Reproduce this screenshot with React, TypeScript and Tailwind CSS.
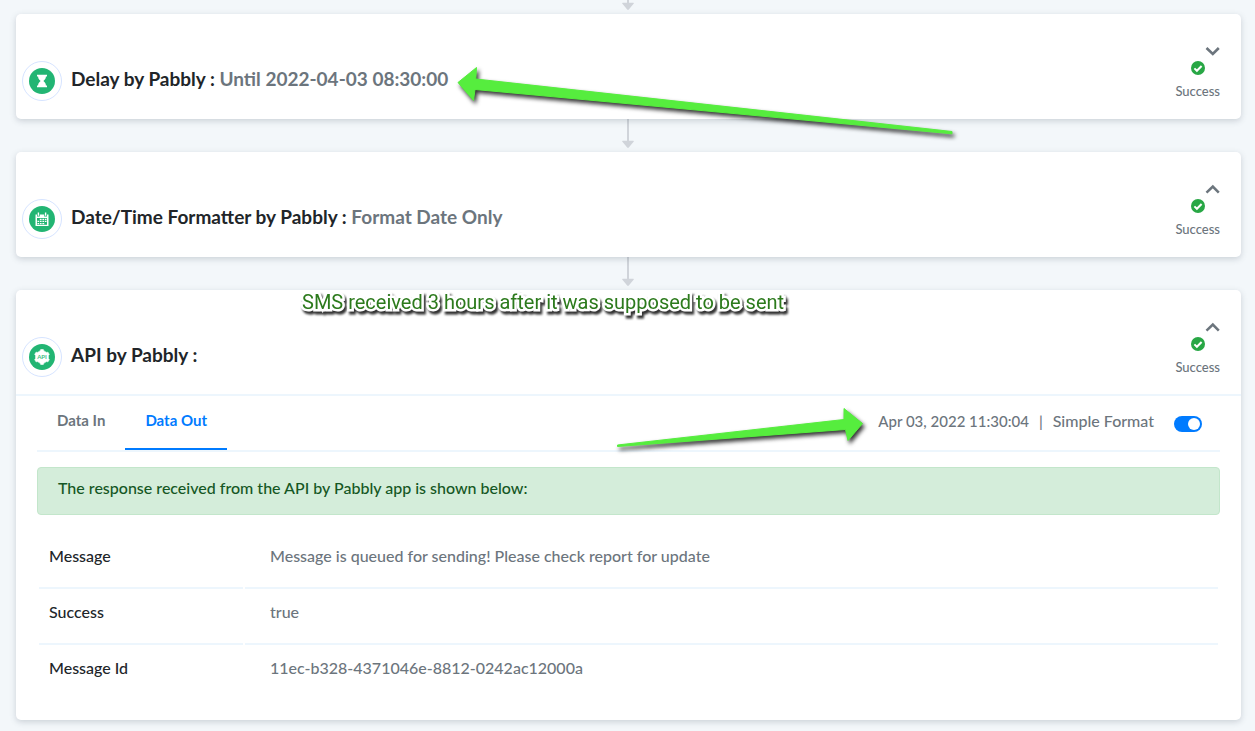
import React, { useState } from 'react';

interface StepHeaderProps {
  title: string;
  detail?: string;
  icon: React.ReactNode;
  open: boolean;
}

interface ResponseRow {
  label: string;
  value: string;
}

const rows: ResponseRow[] = [
  { label: 'Message', value: 'Message is queued for sending! Please check report for update' },
  { label: 'Success', value: 'true' },
  { label: 'Message Id', value: '11ec-b328-4371046e-8812-0242ac12000a' }
];

const HourglassIcon = () => (
  <svg className="w-[26px] h-[26px]" viewBox="0 0 26 26">
    <circle cx="13" cy="13" r="13" fill="#22b573" />
    <path
      d="M8 6.800h10v1.700h-1.100c0 2-1 3.400-2.500 4.500 1.500 1.100 2.500 2.500 2.500 4.500H18v1.700H8v-1.700h1.100c0-2 1-3.400 2.500-4.500-1.500-1.100-2.500-2.500-2.500-4.500H8z"
      fill="white"
    />
  </svg>
);

const CalendarIcon = () => (
  <svg className="w-[26px] h-[26px]" viewBox="0 0 26 26">
    <circle cx="13" cy="13" r="13" fill="#22b573" />
    <path d="M6.500 8.500h13v11.500h-13z" fill="white" />
    <path d="M8 7h2.800v3.400H8zM15.200 7H18v3.400h-2.800z" fill="#22b573" />
    <path d="M8.700 6.500h1.400v3.200H8.700zM15.900 6.500h1.400v3.200h-1.400z" fill="white" />
    <path d="M8 12h10v6.800H8z" fill="#22b573" />
    <path
      d="M10.800 12.700h1.800v1.300h-1.800zM13.400 12.700h1.800v1.300h-1.800zM16 12.700h1.500v1.300H16zM8.500 14.800h1.500v1.300H8.500zM10.800 14.800h1.800v1.300h-1.800zM13.400 14.800h1.800v1.300h-1.800zM16 14.800h1.500v1.300H16zM8.500 16.900h1.500v1.300H8.500zM10.800 16.900h1.800v1.300h-1.800zM13.400 16.900h1.800v1.300h-1.800z"
      fill="white"
    />
  </svg>
);

const ApiIcon = () => (
  <svg className="w-[26px] h-[26px]" viewBox="0 0 26 26">
    <circle cx="13" cy="13" r="13" fill="#22b573" />
    <path
      d="M11.700 5.500h2.600l.6 1.400 2.600 1.500 1.500-.200 1.300 2.200-.9 1.200v2.800l.9 1.200-1.300 2.200-1.500-.200-2.600 1.500-.6 1.400h-2.600l-.6-1.400-2.600-1.500-1.500.2-1.300-2.200.9-1.200v-2.800l-.9-1.200L7 8.200l1.500.2 2.600-1.500z"
      fill="white"
      stroke="white"
      strokeWidth=".6"
      strokeLinejoin="round"
    />
    <text x="13" y="15.200" textAnchor="middle" fontSize="6" fontWeight="700" fill="#3dbd83" fontFamily="Lato, sans-serif">
      API
    </text>
  </svg>
);

const Connector = () => (
  <div className="flex justify-center">
    <svg className="w-[13px] h-[33px]" viewBox="0 0 13 33">
      <path d="M5 0h2v22H5z" fill="#d0d4da" />
      <path d="M.700 21.800h10.600q1 .2.300 1L6.800 28.600q-.800.700-1.600 0L.400 22.800q-.700-.8.300-1z" fill="#d0d4da" />
    </svg>
  </div>
);

const StepHeader: React.FC<StepHeaderProps> = ({ title, detail, icon, open }) => (
  <div className="flex items-start justify-between pl-1.5 pr-[21px] pt-8 pb-[17px]">
    <div className="flex items-center gap-[9px] pt-[15px]">
      <div className="flex w-10 h-10 shrink-0 items-center justify-center rounded-full border border-[#d6e4ff]">
        {icon}
      </div>
      <h2 className="pb-1 font-[Lato,sans-serif] text-[19px] leading-6 font-bold text-[#212529]">
        {title} : {detail && <span className="text-[#6c757d]">{detail}</span>}
      </h2>
    </div>
    <div className="flex flex-col items-center">
      <button type="button" aria-label={open ? 'Collapse step' : 'Expand step'} className="self-end">
        <svg className="w-4 h-[14px]" viewBox="0 0 16 14" fill="none" stroke="#6c757d" strokeWidth="2.600">
          {open ? <path d="M2.500 8.600L8.800 2.600l6 6" /> : <path d="M2.500 2l6.300 6 6-6" />}
        </svg>
      </button>
      <svg className="w-[14px] h-[14px] mt-px" viewBox="0 0 14 14">
        <circle cx="7" cy="7" r="7" fill="#28a745" />
        <path d="M3.400 7.400l2.500 2.400 4.700-4.800" fill="none" stroke="white" strokeWidth="2" />
      </svg>
      <span className="mt-1.5 text-[13px] leading-5 text-[#6c757d]">Success</span>
    </div>
  </div>
);

const ResponseTable = () => (
  <table className="mt-[18px] w-full border-separate border-spacing-[2px] text-left text-[16px] leading-6">
    <tbody>
      {rows.map((row, index) => {
        const line = index < rows.length - 1 ? 'border-[#edf6fd]' : 'border-transparent';
        return (
          <tr key={row.label}>
            <th scope="row" className={`w-[204px] border-b-2 pt-[9px] pb-[19px] pl-2.5 font-medium text-[#212529] ${line}`}>
              {row.label}
            </th>
            <td className={`border-b-2 pt-[9px] pb-[19px] pl-[25px] text-[#6c757d] ${line}`}>{row.value}</td>
          </tr>
        );
      })}
    </tbody>
  </table>
);

export default function App() {
  const [simple, setSimple] = useState(true);
  const card = 'relative rounded-[5px] bg-white shadow-[0_2px_6px_rgba(60,75,90,0.22)]';

  return (
    <main className="min-h-screen overflow-hidden bg-[#f3f7fa] pl-4 pr-3.5 pb-[11px] font-['Lato_Medium',Lato,sans-serif]">
      <div className="flex h-3.5 items-end justify-center overflow-hidden">
        <Connector />
      </div>

      <section className={`${card} z-10 pb-px`}>
        <StepHeader title="Delay by Pabbly" detail="Until 2022-04-03 08:30:00" icon={<HourglassIcon />} open={false} />
        <svg
          className="pointer-events-none absolute left-[434px] top-[46px] h-[84px] w-[516px] drop-shadow-[2px_3px_2px_rgba(0,0,0,0.8)]"
          viewBox="450 60 516 84"
        >
          <path
            d="M458 82.500L476.500 67.500 475.800 79 952 131.500V133.800L475 89.500 473.500 100.500z"
            fill="#56ed3e"
            stroke="#56ed3e"
            strokeLinejoin="round"
          />
        </svg>
      </section>
      <Connector />

      <section className={`${card} pb-px`}>
        <StepHeader title="Date/Time Formatter by Pabbly" detail="Format Date Only" icon={<CalendarIcon />} open />
      </section>
      <Connector />

      <section className={card}>
        <p className="absolute left-[286px] top-0 whitespace-nowrap font-[Roboto,sans-serif] text-[20px] leading-6 text-[#2c7a1c] [-webkit-text-stroke:5px_white] [paint-order:stroke_fill] drop-shadow-[2px_3px_1px_rgba(0,0,0,0.8)]">
          SMS received 3 hours after it was supposed to be sent
        </p>
        <StepHeader title="API by Pabbly" icon={<ApiIcon />} open />
        <div className="border-t-2 border-[#edf6fd] pl-[21px] pr-[21px] pb-[17px]">
          <div className="flex items-start justify-between border-b-2 border-[#edf6fd] text-[15px] leading-6">
            <div role="tablist" className="flex font-[Lato,sans-serif]">
              <button type="button" role="tab" aria-selected="false" className="px-5 pt-3 pb-[18px] font-bold text-[#6c757d]">
                Data In
              </button>
              <button
                type="button"
                role="tab"
                aria-selected="true"
                className="border-b-2 border-[#007bff] px-5 pt-3 pb-4 font-bold text-[#007bff]"
              >
                Data Out
              </button>
            </div>
            <div className="flex pt-[13px] pr-[18px] text-[#6c757d]">
              <span>Apr 03, 2022 11:30:04</span>
              <span className="px-2.5">|</span>
              <label htmlFor="simple-format" className="pr-5 text-[16px]">
                Simple Format
              </label>
              <input
                id="simple-format"
                type="checkbox"
                checked={simple}
                onChange={(e) => setSimple(e.target.checked)}
                className="mt-[7px] h-4 w-7 appearance-none rounded-full bg-gray-400 p-0.5 before:block before:h-3 before:w-3 before:rounded-full before:bg-white checked:bg-[#007bff] checked:before:ml-auto"
              />
            </div>
          </div>
          <div className="mt-[15px] rounded border border-[#c3e6cb] bg-[#d4edda] px-5 pt-2 pb-3.5 text-[16px] leading-6 text-[#155724]">
            The response received from the API by Pabbly app is shown below:
          </div>
          <ResponseTable />
        </div>
        <svg
          className="pointer-events-none absolute left-[594px] top-[110px] h-[56px] w-[264px] drop-shadow-[2px_3px_2px_rgba(0,0,0,0.8)]"
          viewBox="610 400 264 56"
        >
          <path
            d="M617.500 445L844 419.500V408.500L862.500 423.500 848 440.500 845.500 429.500 617.500 446.500z"
            fill="#56ed3e"
            stroke="#56ed3e"
            strokeLinejoin="round"
          />
        </svg>
      </section>
    </main>
  );
}
